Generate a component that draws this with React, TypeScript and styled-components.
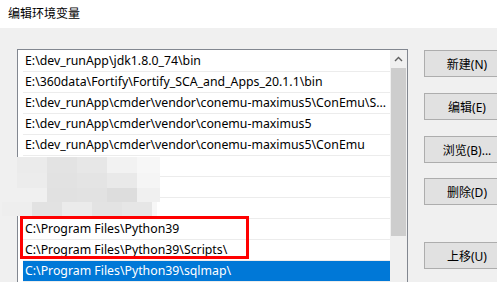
import React from 'react';
import styled, { createGlobalStyle } from 'styled-components';

const GlobalStyle = createGlobalStyle`
  html, body {
    margin: 0;
    padding: 0;
    background: #f0f0f0;
  }
  body {
    font-family: "Noto Sans", "Noto Sans CJK SC", sans-serif;
    font-size: 12px;
    color: #000;
  }
`;

const Window = styled.div`
  position: relative;
  width: 497px;
  height: 282px;
  overflow: hidden;
  background: #f0f0f0;
`;

const TitleBar = styled.div`
  height: 28px;
  padding-left: 8px;
  background: #fff;
  font-family: "Noto Sans CJK SC", sans-serif;
  font-size: 12px;
  line-height: 26px;
`;

const Body = styled.div`
  display: flex;
  align-items: flex-start;
  gap: 16px;
  padding: 21px 0 0 17px;
`;

const ListBox = styled.div`
  display: flex;
  flex-shrink: 0;
  width: 389px;
  height: 260px;
  border: 1px solid #828790;
  background: #fff;
`;

const Rows = styled.ul`
  flex: 1;
  margin: 0;
  padding: 1px 0 0 0;
  list-style: none;
`;

const Row = styled.li<{ $selected?: boolean }>`
  height: 20px;
  margin-left: 5px;
  padding-left: 2px;
  border-bottom: 1px solid #ececec;
  font-size: 12.3px;
  line-height: 20px;
  white-space: nowrap;
  overflow: hidden;
  background: ${(p) => (p.$selected ? '#0078d7' : 'transparent')};
  color: ${(p) => (p.$selected ? '#fff' : '#000')};
`;

const ScrollBar = styled.div`
  display: flex;
  flex-direction: column;
  width: 17px;
  background: #f0f0f0;
`;

const ArrowButton = styled.div`
  display: flex;
  align-items: center;
  justify-content: center;
  height: 17px;
`;

const Thumb = styled.div`
  height: 168px;
  margin: 1px 1px 0;
  background: #cdcdcd;
`;

const ButtonColumn = styled.div`
  display: flex;
  flex-direction: column;
  padding-top: 1px;
`;

const Button = styled.button<{ $gap: number }>`
  flex-shrink: 0;
  width: 86px;
  height: 27px;
  margin-top: ${(p) => p.$gap}px;
  padding: 0;
  border: 1px solid #adadad;
  background: #e1e1e1;
  color: #000;
  font-family: "Noto Sans", "Noto Sans CJK SC", sans-serif;
  font-size: 12px;
  text-align: center;
`;

const Highlight = styled.div`
  position: absolute;
  left: 20px;
  top: 216px;
  width: 223px;
  height: 37px;
  border: 3px solid #ff0000;
`;

const Mosaic = styled.div`
  position: absolute;
  left: 0;
  top: 157px;
`;

const MosaicBand = styled.div<{ $offset: number; $height: number }>`
  display: flex;
  height: ${(p) => p.$height}px;
  padding-left: ${(p) => p.$offset}px;
`;

const MosaicCell = styled.div<{ $shade: string; $width: number }>`
  width: ${(p) => p.$width}px;
  background: ${(p) => p.$shade};
`;

const paths = [
  'E:\\dev_runApp\\jdk1.8.0_74\\bin',
  'E:\\360data\\Fortify\\Fortify_SCA_and_Apps_20.1.1\\bin',
  'E:\\dev_runApp\\cmder\\vendor\\conemu-maximus5\\ConEmu\\S...',
  'E:\\dev_runApp\\cmder\\vendor\\conemu-maximus5',
  'E:\\dev_runApp\\cmder\\vendor\\conemu-maximus5\\ConEmu',
  '',
  '',
  '',
  'C:\\Program Files\\Python39',
  'C:\\Program Files\\Python39\\Scripts\\',
  'C:\\Program Files\\Python39\\sqlmap\\',
];

// blurred-out rows: bands of [shade, width]
const mosaic: { offset: number; height: number; cells: [string, number][] }[] = [
  { offset: 17, height: 16, cells: [['#ebebeb', 30], ['#e3e3e3', 30], ['#e7e7e7', 30], ['#f2f2f2', 30], ['#f7f7f7', 23]] },
  { offset: 17, height: 15, cells: [['#ececec', 30], ['#e2e2e2', 30], ['#e4e4e4', 30], ['#e9e9e9', 30], ['#f5f5f5', 23]] },
  { offset: 17, height: 14, cells: [['#f0f0f0', 30], ['#e1e1e1', 30], ['#e2e2e2', 30], ['#dddddd', 30], ['#f0f0f0', 23]] },
  { offset: 2, height: 14, cells: [['#eeeeee', 30], ['#e2e2e2', 30], ['#ebebeb', 30], ['#e3e3e3', 30], ['#e6e6e6', 30], ['#f7f7f7', 5]] },
];

const buttons = [
  { label: '新建(N)', gap: 0 },
  { label: '编辑(E)', gap: 16 },
  { label: '浏览(B)...', gap: 16 },
  { label: '删除(D)', gap: 15 },
  { label: '上移(U)', gap: 37 },
];

export default function App() {
  return (
    <Window>
      <GlobalStyle />
      <TitleBar>编辑环境变量</TitleBar>
      <Body>
        <ListBox>
          <Rows>
            {paths.map((p, i) => (
              <Row key={i} $selected={i === paths.length - 1}>
                {p}
              </Row>
            ))}
          </Rows>
          <ScrollBar>
            <ArrowButton>
              <svg width="9" height="6" viewBox="0 0 9 6">
                <polyline points="1,5 4.5,1.5 8,5" fill="none" stroke="#606060" strokeWidth="1.4" />
              </svg>
            </ArrowButton>
            <Thumb />
          </ScrollBar>
        </ListBox>
        <ButtonColumn>
          {buttons.map((b) => (
            <Button key={b.label} $gap={b.gap}>
              {b.label}
            </Button>
          ))}
        </ButtonColumn>
      </Body>
      <Mosaic>
        {mosaic.map((band, i) => (
          <MosaicBand key={i} $offset={band.offset} $height={band.height}>
            {band.cells.map(([shade, width], j) => (
              <MosaicCell key={j} $shade={shade} $width={width} />
            ))}
          </MosaicBand>
        ))}
      </Mosaic>
      <Highlight />
    </Window>
  );
}
